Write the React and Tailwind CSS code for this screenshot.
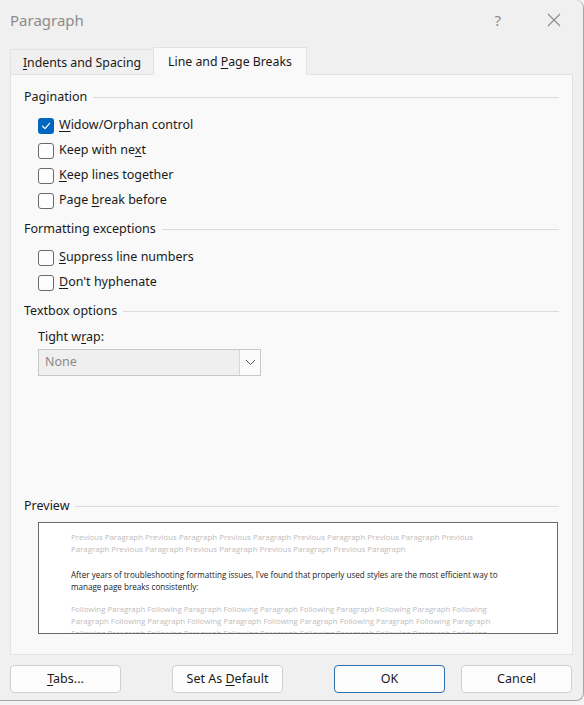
import React from "react";

const font = { fontFamily: '"Noto Sans", "Open Sans", sans-serif' };

function Check({ checked }) {
  return checked ? (
    <span className="w-[16px] h-[16px] rounded-[3px] bg-[#0067c0] flex items-center justify-center shrink-0">
      <svg width="10" height="10" viewBox="0 0 10 10" fill="none">
        <path d="M1.5 5.2 L4 7.6 L8.6 2.4" stroke="white" strokeWidth="1.2" strokeLinecap="round" strokeLinejoin="round" />
      </svg>
    </span>
  ) : (
    <span className="w-[16px] h-[16px] rounded-[3px] border border-[#6a6a6a] bg-[#fdfdfd] shrink-0" />
  );
}

function Row({ checked, children }) {
  return (
    <div className="h-[25px] flex items-center pl-[14px] gap-[5px]">
      <Check checked={checked} />
      <span className="text-[12.5px] text-[#1a1a1a] leading-none">{children}</span>
    </div>
  );
}

function Heading({ children, className = "" }) {
  return (
    <div className={"h-[20px] flex items-center gap-[6px] pr-[13px] " + className}>
      <span className="text-[12.5px] text-[#1a1a1a] leading-none whitespace-nowrap">{children}</span>
      <span className="flex-1 h-px bg-[#dcdcdc]" />
    </div>
  );
}

function U({ children }) {
  return <span className="underline underline-offset-[2px] decoration-[1px]">{children}</span>;
}

function Btn({ children, primary }) {
  return (
    <div
      className={
        "w-[111px] h-[28px] rounded-[4px] border flex items-center justify-center text-[12.5px] text-[#1a1a1a] bg-[#fdfdfd] " +
        (primary ? "border-[#2f6fb3]" : "border-[#d0d0d0]")
      }
    >
      {children}
    </div>
  );
}

export default function App() {
  return (
    <div className="w-[584px] h-[705px] bg-[#f4f4f4] overflow-hidden" style={font}>
      <div className="w-[584px] h-[701px] bg-[#f0f0f0] border-r border-b border-[#a6a6a6] rounded-tr-[8px] rounded-br-[8px] flex flex-col">
        {/* title bar */}
        <div className="h-[47px] flex items-start pt-[9px] pl-[10px] pr-[22px] shrink-0">
          <span className="text-[15px] text-[#8c8c8c] leading-[22px]">Paragraph</span>
          <span className="ml-auto mr-[46px] text-[15px] text-[#8c8c8c] leading-[22px]">?</span>
          <svg width="14" height="14" viewBox="0 0 14 14" className="mt-[4px]">
            <path d="M1 1 L13 13 M13 1 L1 13" stroke="#8c8c8c" strokeWidth="1.1" />
          </svg>
        </div>
        {/* tabs */}
        <div className="h-[27px] flex items-end pl-[10px] shrink-0 relative z-10">
          <div className="w-[143px] h-[25px] border-t border-l border-[#e2e2e2] bg-[#f0f0f0] flex items-center justify-center text-[12.3px] text-[#1a1a1a] pt-[3px]">
            <span><U>I</U>ndents and Spacing</span>
          </div>
          <div className="w-[154px] h-[28px] -mb-px border-t border-l border-r border-[#e2e2e2] bg-[#f9f9f9] flex items-center justify-center text-[12.3px] text-[#1a1a1a] pt-[1px]">
            <span>Line and <U>P</U>age Breaks</span>
          </div>
        </div>
        {/* panel */}
        <div className="mx-[10px] h-[581px] bg-[#f9f9f9] border border-[#e2e2e2] shrink-0 flex flex-col pl-[13px] pt-[12px]">
          <Heading>Pagination</Heading>
          <div className="mt-[6px]">
            <Row checked><U>W</U>idow/Orphan control</Row>
            <Row>Keep with ne<U>x</U>t</Row>
            <Row><U>K</U>eep lines together</Row>
            <Row>Page <U>b</U>reak before</Row>
          </div>
          <Heading className="mt-[6px]">Formatting exceptions</Heading>
          <div className="mt-[6px]">
            <Row><U>S</U>uppress line numbers</Row>
            <Row><U>D</U>on't hyphenate</Row>
          </div>
          <Heading className="mt-[6px]">Textbox options</Heading>
          <div className="pl-[14px] mt-[6px] h-[20px] flex items-center text-[12.5px] text-[#1a1a1a]">
            <span>Tight w<U>r</U>ap:</span>
          </div>
          <div className="ml-[14px] mt-[2px] w-[223px] h-[27px] border border-[#c8c8c8] bg-[#efefef] flex items-stretch">
            <span className="flex-1 flex items-center pl-[6px] text-[12.5px] text-[#8a8a8a]">None</span>
            <span className="w-[21px] bg-[#fbfbfb] border-l border-[#d6d6d6] flex items-center justify-center">
              <svg width="11" height="7" viewBox="0 0 11 7">
                <path d="M1 1 L5.5 5.5 L10 1" stroke="#555" strokeWidth="1" fill="none" />
              </svg>
            </span>
          </div>
          <Heading className="mt-[120px]">Preview</Heading>
          <div className="ml-[14px] mt-[6px] w-[520px] h-[112px] bg-white border border-[#6a6a6a] overflow-hidden pl-[32px] pt-[8px]">
            <div className="leading-[12px] whitespace-nowrap" style={{ fontFamily: '"Open Sans", "Noto Sans", sans-serif' }}>
              <div className="text-[#bdbdbd] text-[7.9px]">
                <div>Previous Paragraph Previous Paragraph Previous Paragraph Previous Paragraph Previous Paragraph Previous</div>
                <div>Paragraph Previous Paragraph Previous Paragraph Previous Paragraph Previous Paragraph</div>
              </div>
              <div className="text-[#1a1a1a] text-[8.1px] mt-[14px]">
                <div>After years of troubleshooting formatting issues, I've found that properly used styles are the most efficient way to</div>
                <div>manage page breaks consistently:</div>
              </div>
              <div className="text-[#bdbdbd] text-[7.8px] mt-[10px] h-[31px]">
                <div>Following Paragraph Following Paragraph Following Paragraph Following Paragraph Following Paragraph Following</div>
                <div>Paragraph Following Paragraph Following Paragraph Following Paragraph Following Paragraph Following Paragraph</div>
                <div>Following Paragraph Following Paragraph Following Paragraph Following Paragraph Following Paragraph Following</div>
              </div>
            </div>
          </div>
        </div>
        {/* buttons */}
        <div className="mt-[10px] px-[10px] flex gap-[51px]">
          <Btn><span><U>T</U>abs...</span></Btn>
          <Btn><span>Set As <U>D</U>efault</span></Btn>
          <div className="flex gap-[16px]">
            <Btn primary>OK</Btn>
            <Btn>Cancel</Btn>
          </div>
        </div>
      </div>
    </div>
  );
}
